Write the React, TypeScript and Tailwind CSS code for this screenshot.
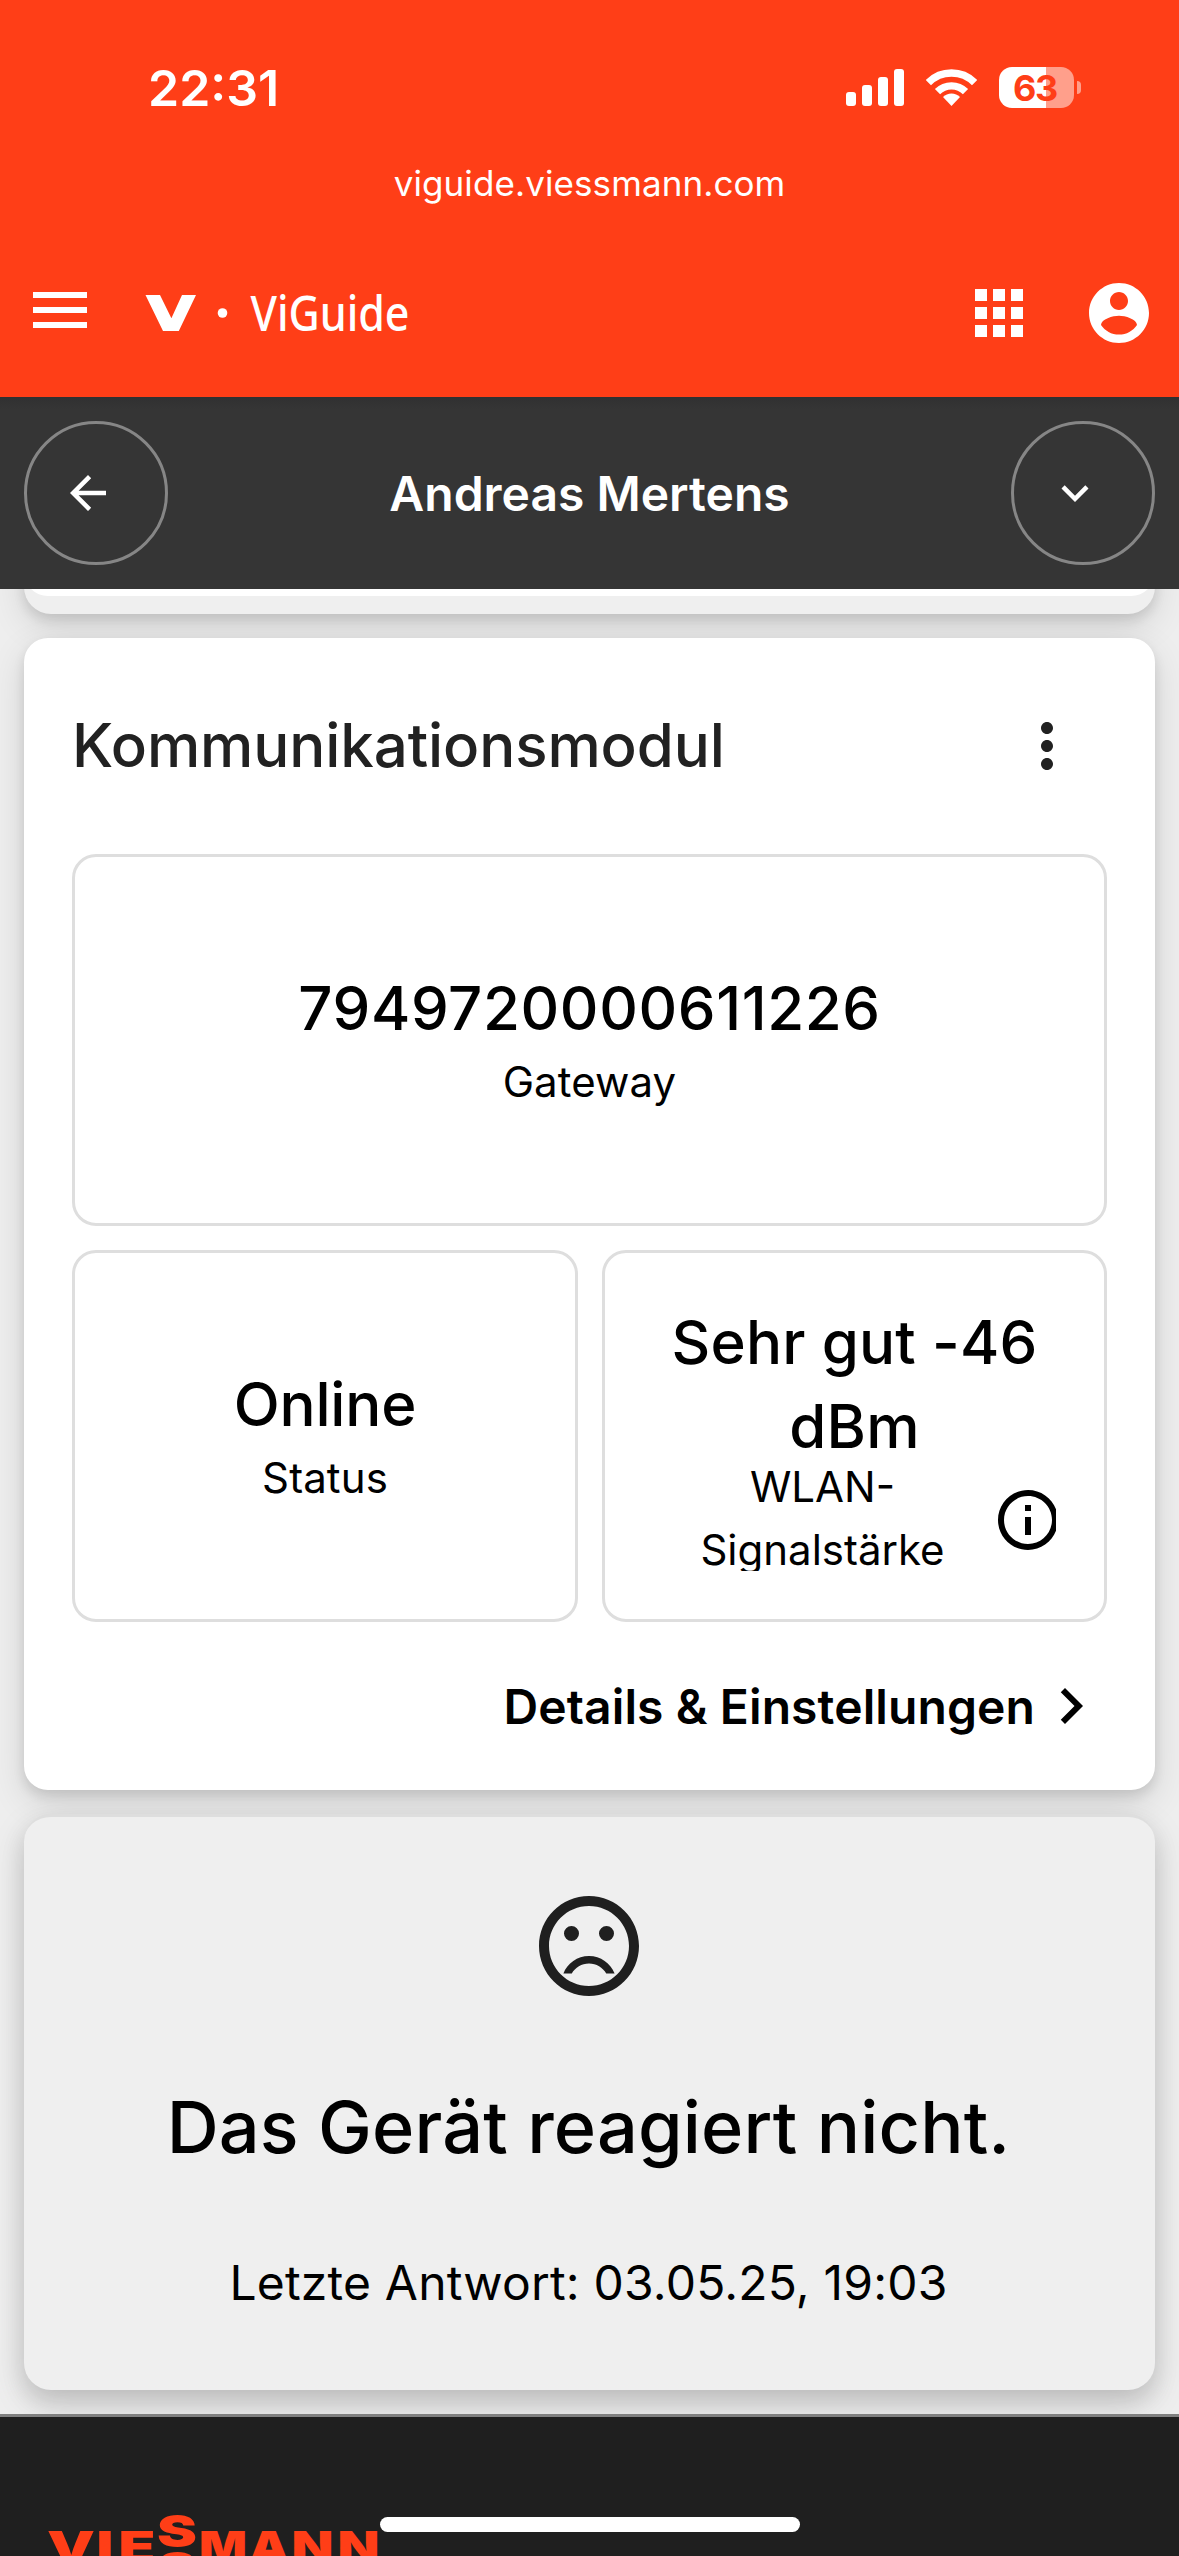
import type { ReactNode } from "react";

type IconProps = { d: string; className: string };

function Icon({ d, className }: IconProps) {
  return (
    <svg viewBox="0 0 24 24" fill="currentColor" className={`block shrink-0 ${className}`}>
      <path d={d} />
    </svg>
  );
}

const icons = {
  account:
    "M12 2C6.48 2 2 6.48 2 12s4.48 10 10 10 10-4.48 10-10S17.52 2 12 2zm0 3c1.66 0 3 1.34 3 3s-1.34 3-3 3-3-1.34-3-3 1.34-3 3-3zm0 14.2c-2.5 0-4.71-1.28-6-3.22.03-1.99 4-3.08 6-3.08 1.99 0 5.97 1.09 6 3.08-1.29 1.94-3.5 3.22-6 3.22z",
  back: "M20 11H7.83l5.59-5.59L12 4l-8 8 8 8 1.41-1.41L7.83 13H20v-2z",
  expand: "M16.59 8.59L12 13.17 7.41 8.59 6 10l6 6 6-6z",
  right: "M10 6L8.59 7.41 13.17 12l-4.58 4.59L10 18l6-6z",
  info: "M11 7h2v2h-2zm0 4h2v6h-2zm1-9C6.48 2 2 6.48 2 12s4.48 10 10 10 10-4.48 10-10S17.52 2 12 2zm0 18c-4.41 0-8-3.59-8-8s3.59-8 8-8 8 3.59 8 8-3.59 8-8 8z",
  sad: "M12 14c-2.33 0-4.32 1.45-5.12 3.5h1.67c.69-1.19 1.97-2 3.45-2s2.75.81 3.45 2h1.67c-.8-2.05-2.79-3.5-5.12-3.5zM8.5 8a1.5 1.5 0 1 0 0 3 1.5 1.5 0 1 0 0-3zM15.5 8a1.5 1.5 0 1 0 0 3 1.5 1.5 0 1 0 0-3zM11.99 2C6.47 2 2 6.48 2 12s4.47 10 9.99 10C17.52 22 22 17.52 22 12S17.52 2 11.99 2zM12 20c-4.42 0-8-3.58-8-8s3.58-8 8-8 8 3.58 8 8-3.58 8-8 8z",
  dots: "M12 8c1.1 0 2-.9 2-2s-.9-2-2-2-2 .9-2 2 .9 2 2 2zm0 2c-1.1 0-2 .9-2 2s.9 2 2 2 2-.9 2-2-.9-2-2-2zm0 6c-1.1 0-2 .9-2 2s.9 2 2 2 2-.9 2-2-.9-2-2-2z",
  apps: "M4 8h4V4H4v4zm6 12h4v-4h-4v4zm-6 0h4v-4H4v4zm0-6h4v-4H4v4zm6 0h4v-4h-4v4zm6-10v4h4V4h-4zm-6 4h4V4h-4v4zm6 6h4v-4h-4v4zm0 6h4v-4h-4v4z",
};

const elevation = "shadow-[0_6px_12px_rgba(0,0,0,0.11),0_12px_36px_rgba(0,0,0,0.12)]";
const elevationSoft = "shadow-[0_12px_24px_rgba(0,0,0,0.12),0_12px_36px_rgba(0,0,0,0.12)]";

function StatusBar() {
  return (
    <div className="flex h-[131px] items-center pt-[44px] pr-[98px] pl-[148px]">
      <span className="text-[50px] leading-none font-semibold">22:31</span>
      <div className="ml-auto flex items-center">
        <div className="flex h-[37px] items-end gap-[6px]">
          <div className="h-[14px] w-[10px] rounded-[3px] bg-white" />
          <div className="h-[21px] w-[10px] rounded-[3px] bg-white" />
          <div className="h-[29px] w-[10px] rounded-[3px] bg-white" />
          <div className="h-[37px] w-[10px] rounded-[3px] bg-white" />
        </div>
        <svg viewBox="0 0 51 37" className="ml-[22px] h-[37px] w-[51px]" fill="none" stroke="#fff" strokeWidth="7.4">
          <path d="M2.4 13.6A32.7 32.7 0 0 1 48.6 13.6" />
          <path d="M11.5 22.7A19.8 19.8 0 0 1 39.5 22.7" />
          <path d="M17 28A12 12 0 0 1 34 28L25.5 37z" fill="#fff" stroke="none" />
        </svg>
        <div className="ml-[22px] flex h-[41px] w-[75px] items-center justify-center rounded-[13px] bg-[linear-gradient(90deg,#fff_47px,#ff9f8b_47px)] pr-[3px] text-[36px] leading-none font-bold tracking-[-1.2px] text-[#ff3e17]">
          63
        </div>
        <div className="ml-[3px] h-[13px] w-[4px] rounded-r-full bg-[#ff9f8b]" />
      </div>
    </div>
  );
}

function Toolbar() {
  return (
    <div className="flex h-[162px] items-center pr-[24px] pb-[6px] pl-[33px]">
      <div className="mb-[6px] flex w-[54px] flex-col gap-[9px]">
        <div className="h-[6px] bg-white" />
        <div className="h-[6px] bg-white" />
        <div className="h-[6px] bg-white" />
      </div>
      <svg viewBox="0 0 290 80" className="ml-[53px] h-[80px] w-[290px]" fill="#fff">
        <path d="M5.5 22H20L31.4 45.3 42 22H56L38.8 58H23z" />
        <circle cx="82.5" cy="40" r="4.8" />
        <text x="110.5" y="57.5" fontSize="48.5" fontWeight="500" fontFamily="Noto Sans, sans-serif" textLength="159" lengthAdjust="spacingAndGlyphs">
          ViGuide
        </text>
      </svg>
      <Icon d={icons.apps} className="ml-auto h-[72px] w-[72px]" />
      <Icon d={icons.account} className="ml-[48px] h-[72px] w-[72px]" />
    </div>
  );
}

function CircleButton({ children }: { children: ReactNode }) {
  return (
    <div className="flex h-[144px] w-[144px] items-center justify-center rounded-full border-[3px] border-[#868686] pr-[16px]">
      {children}
    </div>
  );
}

function Tile({ value, label, spacing }: { value: string; label: string; spacing?: string }) {
  return (
    <div className="flex h-[372px] min-w-0 flex-1 flex-col items-center justify-center rounded-[24px] border-[3px] border-[#dedede] pb-[2px]">
      <div className={`text-[60px] leading-[84px] font-medium ${spacing ?? ""}`}>{value}</div>
      <div className="text-[42px] leading-[63px] tracking-[0.1px]">{label}</div>
    </div>
  );
}

function FooterLogo() {
  const letters: [string, number, number, number, number][] = [
    ["V", 47, 48, 2561.5, 42],
    ["I", 96.5, 17, 2561.5, 42],
    ["E", 118.5, 37, 2561.5, 42],
    ["S", 157, 40, 2546.5, 44],
    ["S", 157, 40, 2583.5, 44],
    ["M", 199, 48, 2561.5, 42],
    ["A", 249, 40, 2561.5, 42],
    ["N", 291.5, 42, 2561.5, 42],
    ["N", 337.5, 42, 2561.5, 42],
  ];
  return (
    <svg viewBox="40 2505 345 51" className="ml-[40px] block h-[51px] w-[345px]">
      {letters.map(([ch, x, w, y, size], i) => (
        <text key={i} x={x} y={y} fontSize={size} fontWeight="900" fill="#ff3e17" fontFamily="Inter, sans-serif" textLength={w} lengthAdjust="spacingAndGlyphs">
          {ch}
        </text>
      ))}
    </svg>
  );
}

export default function App() {
  return (
    <div className="relative flex h-[2556px] w-[1179px] flex-col overflow-hidden bg-[#eeeeee] font-[Inter,sans-serif] text-black">
      <header className="h-[397px] shrink-0 bg-[#ff3e17] text-white">
        <StatusBar />
        <div className="flex h-[104px] items-center justify-center text-[35px] leading-none tracking-[0.1px]">
          viguide.viessmann.com
        </div>
        <Toolbar />
      </header>

      <div className="z-10 flex h-[192px] shrink-0 items-center justify-between bg-[linear-gradient(180deg,#303031,#353535_12px)] px-[24px] text-white">
        <CircleButton>
          <Icon d={icons.back} className="h-[54px] w-[54px]" />
        </CircleButton>
        <h1 className="pt-[2px] text-[48px] leading-none font-semibold">Andreas Mertens</h1>
        <CircleButton>
          <Icon d={icons.expand} className="h-[54px] w-[54px]" />
        </CircleButton>
      </div>

      <main className="flex h-[1825px] shrink-0 flex-col gap-[24px] px-[24px] pb-[24px]">
        <section className={`-mt-[60px] h-[85px] shrink-0 rounded-[27px] bg-[#efefef] ${elevation}`}>
          <div className="h-[67px] rounded-[24px] bg-white" />
        </section>

        <section className={`h-[1152px] shrink-0 rounded-[24px] bg-white px-[48px] ${elevation}`}>
          <div className="flex h-[216px] items-center justify-between">
            <h2 className="pb-[2px] text-[60px] leading-none font-medium tracking-[-0.1px] text-[#212121]">Kommunikationsmodul</h2>
            <Icon d={icons.dots} className="mr-[24px] h-[72px] w-[72px] text-[#212121]" />
          </div>
          <div className="flex">
            <Tile value="7949720000611226" label="Gateway" spacing="tracking-[0.59px]" />
          </div>
          <div className="mt-[24px] flex gap-[24px]">
            <Tile value="Online" label="Status" spacing="tracking-[-0.2px]" />
            <div className="h-[372px] w-[505px] shrink-0 rounded-[24px] border-[3px] border-[#dedede] px-[48px] pt-[47px]">
              <div className="h-[271px] overflow-hidden text-center">
                <div className="text-[60px] leading-[84px] font-medium tracking-[0.17px]">Sehr gut -46 dBm</div>
                <div className="-mt-[13px] flex items-start">
                  <div className="w-[339px] shrink-0 text-[42px] leading-[63px]">WLAN-Signalstärke</div>
                  <Icon d={icons.info} className="mt-[29px] h-[72px] w-[72px]" />
                </div>
              </div>
            </div>
          </div>
          <div className="mt-[48px] flex h-[72px] items-center justify-end">
            <span className="pt-[2px] text-[48px] leading-none font-semibold tracking-[0.1px]">Details &amp; Einstellungen</span>
            <Icon d={icons.right} className="h-[72px] w-[72px]" />
          </div>
        </section>

        <section
          className={`flex h-[576px] shrink-0 flex-col items-center rounded-[27px] border-t-[3px] border-[#dedede] bg-[#efefef] pt-[69px] pr-[2px] ${elevationSoft}`}
        >
          <Icon d={icons.sad} className="h-[120px] w-[120px] text-[#1f1f1f]" />
          <div className="mt-[71px] text-[72px] leading-[100px] font-medium tracking-[0.15px]">Das Gerät reagiert nicht.</div>
          <div className="mt-[70px] text-[48px] leading-[72px] tracking-[0.2px]">Letzte Antwort: 03.05.25, 19:03</div>
        </section>
      </main>

      <footer className="z-10 h-[142px] shrink-0 border-t-[3px] border-[#808080] bg-[#1f1f1f] pt-[88px]">
        <FooterLogo />
      </footer>
      <div className="absolute bottom-[24px] left-[380px] z-20 h-[15px] w-[420px] rounded-full bg-white" />
    </div>
  );
}
